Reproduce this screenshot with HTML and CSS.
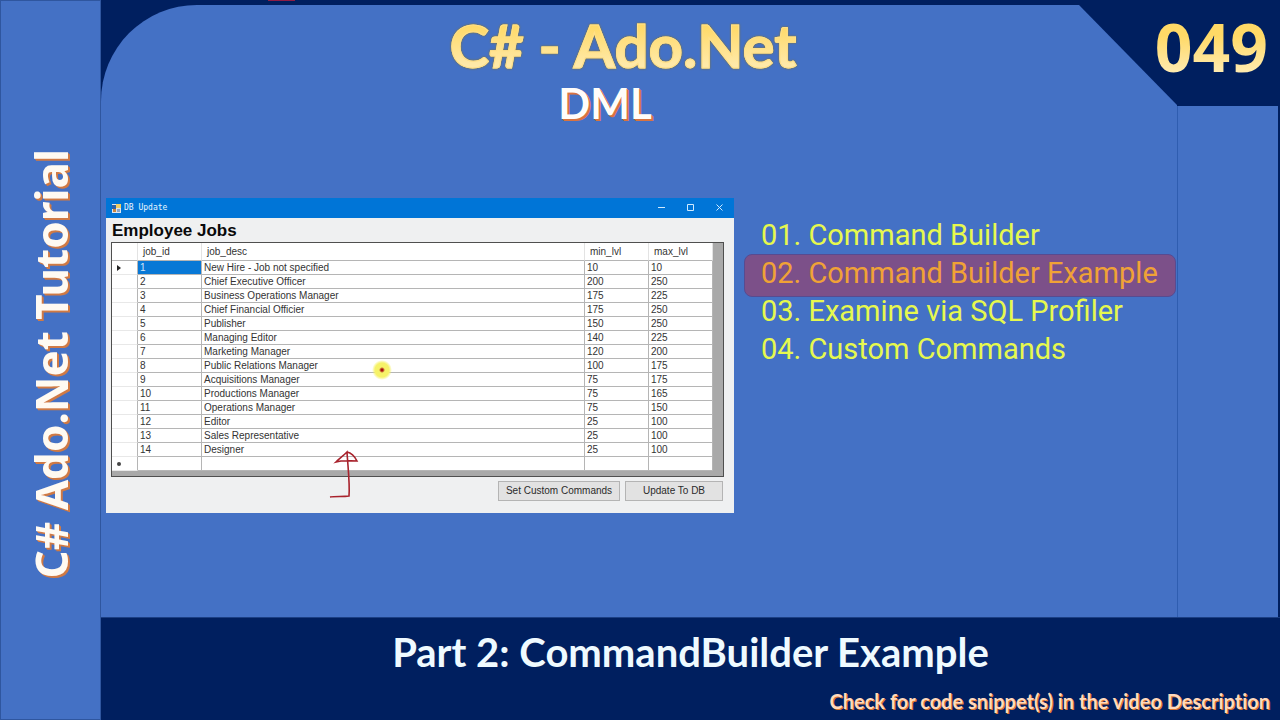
FILE: index.html
```
<!DOCTYPE html>
<html lang="en">
<head>
<meta charset="utf-8">
<title>C# Ado.Net Tutorial</title>
<link rel="stylesheet" href="styles.css">
</head>
<body>
<aside class="sidebar"><p class="sidebar-title">C# Ado.Net Tutorial</p></aside>
<div class="slide">
  <span class="top-mark"></span>
  <main class="stage">
    <section class="panel">
      <header class="heading">
        <h1 class="title">C# - Ado.Net</h1>
        <h2 class="subtitle">DML</h2>
      </header>
      <div class="content">
        <section class="window">
          <div class="titlebar">
            <svg class="app-icon" viewBox="0 0 9 9"><rect width="9" height="9" fill="#dfe6ee"/><rect x="0" y="1" width="4" height="4" fill="#2f62a8"/><rect x="4" y="0" width="5" height="4" fill="#f4cf63"/><rect x="1" y="5" width="3" height="3" fill="#c9853c"/><rect x="5" y="5" width="3" height="3" fill="#8aa6c8"/></svg>
            <span class="window-name">DB Update</span>
            <button class="control" aria-label="Minimize"><svg viewBox="0 0 8 8"><path d="M0 3.5H7"/></svg></button>
            <button class="control" aria-label="Maximize"><svg viewBox="0 0 8 8"><path d="M0.5 0.5H6.5V6.5H0.5Z"/></svg></button>
            <button class="control" aria-label="Close"><svg viewBox="0 0 8 8"><path d="M0.5 0.5L6.5 6.5M6.5 0.5L0.5 6.5"/></svg></button>
          </div>
          <div class="window-body">
            <h3 class="form-title">Employee Jobs</h3>
            <div class="grid-box">
              <table class="jobs">
                <colgroup><col class="c-mark"><col class="c-num"><col><col class="c-num"><col class="c-num"></colgroup>
                <thead><tr><th></th><th>job_id</th><th>job_desc</th><th>min_lvl</th><th>max_lvl</th></tr></thead>
                <tbody>
                  <tr><td><svg class="row-arrow" viewBox="0 0 4 6"><path d="M0 0L4 3L0 6Z"/></svg></td><td class="selected">1</td><td>New Hire - Job not specified</td><td>10</td><td>10</td></tr>
                  <tr><td></td><td>2</td><td>Chief Executive Officer</td><td>200</td><td>250</td></tr>
                  <tr><td></td><td>3</td><td>Business Operations Manager</td><td>175</td><td>225</td></tr>
                  <tr><td></td><td>4</td><td>Chief Financial Officier</td><td>175</td><td>250</td></tr>
                  <tr><td></td><td>5</td><td>Publisher</td><td>150</td><td>250</td></tr>
                  <tr><td></td><td>6</td><td>Managing Editor</td><td>140</td><td>225</td></tr>
                  <tr><td></td><td>7</td><td>Marketing Manager</td><td>120</td><td>200</td></tr>
                  <tr><td></td><td>8</td><td>Public Relations Manager</td><td>100</td><td>175</td></tr>
                  <tr><td></td><td>9</td><td>Acquisitions Manager</td><td>75</td><td>175</td></tr>
                  <tr><td></td><td>10</td><td>Productions Manager</td><td>75</td><td>165</td></tr>
                  <tr><td></td><td>11</td><td>Operations Manager</td><td>75</td><td>150</td></tr>
                  <tr><td></td><td>12</td><td>Editor</td><td>25</td><td>100</td></tr>
                  <tr><td></td><td>13</td><td>Sales Representative</td><td>25</td><td>100</td></tr>
                  <tr><td></td><td>14</td><td>Designer</td><td>25</td><td>100</td></tr>
                  <tr><td><svg class="row-dot" viewBox="0 0 4 4"><circle cx="2" cy="2" r="2"/></svg></td><td></td><td></td><td></td><td></td></tr>
                </tbody>
              </table>
            </div>
            <div class="actions">
              <button class="action wide">Set Custom Commands</button>
              <button class="action">Update To DB</button>
            </div>
          </div>
          <span class="pointer"></span>
          <svg class="ink-arrow" viewBox="0 0 30 50"><path d="M1 47C7 46 14 47 20 46C21 34 19 18 18 2C14 6 10 9 7 12C14 10 20 11 28 11C26 7 23 3 18 2"/></svg>
        </section>
        <ol class="topics">
          <li class="topic">01. Command Builder</li>
          <li class="topic current">02. Command Builder Example</li>
          <li class="topic">03. Examine via SQL Profiler</li>
          <li class="topic">04. Custom Commands</li>
        </ol>
      </div>
    </section>
    <div class="episode-column">
      <p class="episode">049</p>
      <div class="side-block"></div>
    </div>
  </main>
  <footer class="footer">
    <p class="part">Part 2: CommandBuilder Example</p>
    <p class="note">Check for code snippet(s) in the video Description</p>
  </footer>
</div>
</body>
</html>
```
FILE: styles.css
```
* { box-sizing: border-box; }
body {
  margin: 0;
  min-height: 100vh;
  display: flex;
  background: #001f5f;
  font-family: "Liberation Sans", Arial, sans-serif;
  font-variant-ligatures: none;
}
h1, h2, h3, p, ol { margin: 0; padding: 0; }
.sidebar {
  flex: 0 0 101px;
  display: flex;
  align-items: center;
  justify-content: center;
  padding-top: 8px;
  background: #4471c5;
  border: 1px solid #2f569f;
}
.sidebar-title {
  writing-mode: vertical-rl;
  transform: rotate(180deg);
  font-family: "Noto Sans", sans-serif;
  font-weight: bold;
  font-size: 44px;
  line-height: 50px;
  white-space: nowrap;
  color: #fffaf2;
  text-shadow: -1px 1px 0 #d07a45, -2px 2px 0 #d07a45;
}
.slide { flex: 1; position: relative; display: flex; flex-direction: column; min-width: 0; }
.top-mark { position: absolute; left: 167px; top: 0; width: 27px; height: 1px; background: #8f1d45; }
.stage { flex: 1; display: flex; padding: 5px 2px 0 0; }
.panel {
  flex: 1;
  min-width: 0;
  background: #4471c5;
  border-top-left-radius: 96px;
  clip-path: polygon(0 0, calc(100% - 98px) 0, 100% 100px, 100% 100%, 0 100%);
  padding: 7px 1px 0 5px;
}
.heading { display: flex; flex-direction: column; align-items: center; padding-right: 36px; height: 186px; }
.title {
  font-family: Lato, sans-serif;
  font-weight: bold;
  font-size: 60px;
  line-height: 66px;
  background: linear-gradient(#ffd966 20%, #ffe9a8 80%);
  background-clip: text;
  -webkit-background-clip: text;
  color: transparent;
  -webkit-text-stroke: 1px #ffe08a;
  filter: drop-shadow(0 0 1px #86762f);
}
.subtitle {
  font-family: Lato, sans-serif;
  font-weight: bold;
  font-size: 42px;
  line-height: 50px;
  padding-right: 36px;
  color: #fffdfa;
  text-shadow: 1px 1px 0 #d97340, 2px 2px 0 #d97340;
}
.content { display: flex; gap: 10px; align-items: flex-start; }
.window { flex: 628 1 0; min-width: 0; position: relative; background: #eff0f1; }
.titlebar { display: flex; align-items: center; height: 20px; padding-left: 6px; background: #0075d7; }
.app-icon { width: 9px; height: 9px; margin-right: 3px; }
.window-name { flex: 1; font: 8px/20px "DejaVu Sans Mono", monospace; color: #e6f5ff; }
.control { width: 29px; height: 20px; padding: 0; border: 0; background: none; display: grid; place-items: center; }
.control svg { width: 8px; height: 8px; fill: none; stroke: #cfeaff; stroke-width: 1; }
.window-body { padding: 2px 10px 12px 5px; }
.form-title { font: bold 17px/22px "Liberation Sans", Arial, sans-serif; color: #090909; padding-left: 1px; }
.grid-box { border: 1px solid #4f4f4f; background: #a9a9a9; padding: 0 10px 5px 0; }
.jobs { width: 100%; table-layout: fixed; border-collapse: separate; border-spacing: 0; background: #fff; color: #333; font-size: 10px; line-height: 12px; }
.c-mark { width: 26px; }
.c-num { width: 64px; }
.jobs th { height: 18px; padding: 1px 5px 0; text-align: left; font-weight: normal; border-right: 1px solid #e3e3e3; border-bottom: 1px solid #b5b5b5; }
.jobs td { height: 14px; padding: 1px 2px 0; white-space: nowrap; border-right: 1px solid #b5b5b5; border-bottom: 1px solid #b5b5b5; }
.jobs td:first-child { border-bottom-color: #e8e8e8; padding-left: 5px; }
.jobs td.selected { background: #0878d6; color: #cfe6fa; }
.row-arrow { display: block; width: 4px; height: 6px; fill: #222; }
.row-dot { display: block; width: 4px; height: 4px; fill: #444; }
.actions { display: flex; justify-content: flex-end; gap: 5px; padding: 4px 1px 0 0; }
.action { width: 98px; height: 20px; padding: 0; border: 1px solid #b4b4b4; background: #e2e2e2; color: #2b2b2b; font: 10px/18px "Liberation Sans", Arial, sans-serif; }
.action.wide { width: 122px; }
.pointer {
  position: absolute; left: 266px; top: 162px; width: 20px; height: 20px; border-radius: 50%;
  background: radial-gradient(circle, #a80e0e 0 1px, #f6f268 3px 7px, #f6f26800 10px);
}
.ink-arrow { position: absolute; left: 223px; top: 252px; width: 30px; height: 50px; fill: none; stroke: #a8222c; stroke-width: 1.6; }
.topics { flex: 432 1 0; min-width: 0; list-style: none; padding-top: 18px; }
.topic { font: 29px/36px Roboto, sans-serif; color: #e6f84e; padding: 0 16px; border: 1px solid transparent; white-space: nowrap; }
.topic.current { color: #f0a236; background: #7c5089; border-color: #574b91; border-radius: 8px; padding-bottom: 5px; margin-bottom: -5px; }
.episode-column { flex: 0 0 101px; min-width: 0; display: flex; flex-direction: column; align-items: flex-end; }
.episode {
  height: 101px; padding-right: 10px; white-space: nowrap;
  font: bold 66px/82px "Noto Sans", sans-serif;
  background: linear-gradient(#ffd966 30%, #ffefc0 75%);
  background-clip: text;
  -webkit-background-clip: text;
  color: transparent;
}
.side-block { flex: 1; align-self: stretch; background: #4471c5; border-left: 1px solid #2f5db0; }
.footer { height: 103px; border-top: 1px solid #1c3f83; padding: 8px 10px 0; }
.part { text-align: center; font-family: Lato, sans-serif; font-weight: bold; font-size: 40px; line-height: 52px; color: #effaff; }
.note { text-align: right; font-family: Lato, sans-serif; font-weight: bold; font-size: 20px; line-height: 28px; color: #ffd9bd; text-shadow: 1px 1px 0 #dd7630; padding-top: 9px; }
```
